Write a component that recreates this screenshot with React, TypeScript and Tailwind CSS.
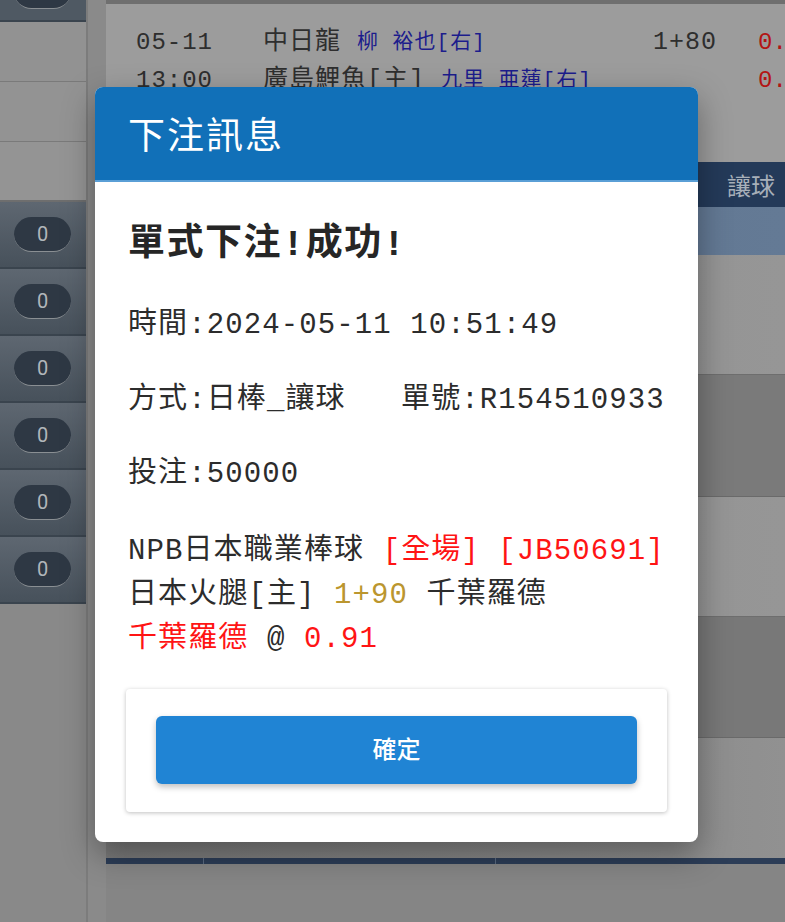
const mono = "font-['Liberation_Mono','Noto_Sans_CJK_TC',monospace]";
const sans = "font-['Noto_Sans_CJK_TC','Noto_Sans',sans-serif]";

function CountRow() {
  return (
    <div className="flex h-[67px] items-center border-b-2 border-[#3a444e] bg-linear-to-b from-[#5e6771] to-[#47515b] pl-[14px]">
      <div className="flex h-[35px] w-[57px] items-center justify-center rounded-full border-b border-[#8a8f93] bg-[#2e3844] font-['Roboto',sans-serif] text-[20px] text-[#b1b6ba]">
        0
      </div>
    </div>
  );
}

function LeftColumn() {
  return (
    <div className="flex w-[88px] flex-col border-r-2 border-[#7c7c7c]">
      <div className="flex h-[22px] items-start overflow-hidden border-b-2 border-[#3a444e] bg-[#4f5963] pl-[14px]">
        <div className="-mt-[26px] h-[35px] w-[57px] shrink-0 rounded-full border-b border-[#8a8f93] bg-[#2e3844]" />
      </div>
      <div className="h-[60px] border-b border-[#7a7a7a] bg-[#929292]" />
      <div className="h-[60px] border-b border-[#7a7a7a] bg-[#939393]" />
      <div className="h-[60px] border-b-2 border-[#6e6e6e] bg-[#949494]" />
      {[0, 1, 2, 3, 4, 5].map((i) => (
        <CountRow key={i} />
      ))}
      <div className="flex-1 bg-[#898989]" />
    </div>
  );
}

function MatchRow({ time, team, pitcher, line }: { time: string; team: string; pitcher: string; line?: string }) {
  return (
    <div className="flex h-[38px] items-center whitespace-nowrap">
      <span className="w-[127px] shrink-0 text-[24px] text-[#2e2e2e]">{time}</span>
      <span className="flex w-[390px] shrink-0 items-center gap-[16px]">
        <span className="text-[25px] text-[#2e2e2e]">{team}</span>
        <span className="text-[21px] text-[#1c1c8c]">{pitcher}</span>
      </span>
      <span className="w-[105px] shrink-0 text-[25px] text-[#2e2e2e]">{line}</span>
      <span className="shrink-0 text-[24px] tracking-normal text-[#b31414]">0.</span>
    </div>
  );
}

function MainArea() {
  return (
    <div className="flex min-w-0 flex-1 flex-col">
      <div className={`h-[162px] overflow-hidden border-t-4 border-[#6f6f6f] bg-[#9c9c9c] pl-[30px] pt-[20px] tracking-[1px] ${mono}`}>
        <MatchRow time="05-11" team="中日龍" pitcher="柳 裕也[右]" line="1+80" />
        <MatchRow time="13:00" team="廣島鯉魚[主]" pitcher="九里 亜蓮[右]" />
      </div>
      <div className={`flex h-[45px] items-center justify-end bg-[#243a59] pr-[10px] text-[24px] text-[#a7afb9] ${sans}`}>
        讓球
      </div>
      <div className="h-[48px] bg-linear-to-r from-[#5b718c] to-[#647a95]" />
      <div className="h-[120px] border-b border-[#6e6e6e] bg-linear-to-r from-[#8c8c8c] to-[#969696]" />
      <div className="h-[122px] border-b border-[#6a6a6a] bg-[#7a7a7a]" />
      <div className="h-[120px] border-b border-[#6e6e6e] bg-linear-to-r from-[#8c8c8c] to-[#969696]" />
      <div className="h-[121px] border-b border-[#6a6a6a] bg-[#787878]" />
      <div className="h-[120px] bg-linear-to-r from-[#7a7a7a] to-[#919191]" />
      <div className="flex h-[6px] bg-[#2c3d57]">
        <div className="w-[98px] border-r border-[#5a6a80]" />
        <div className="w-[292px] border-r border-[#5a6a80]" />
        <div className="flex-1" />
      </div>
      <div className="flex-1 bg-[#858585]" />
    </div>
  );
}

export default function App() {
  return (
    <div className="relative flex h-[922px] w-[785px] overflow-hidden bg-[#888888]">
      <LeftColumn />
      <div className="w-[18px] bg-[#8a8a8a]" />
      <MainArea />

      {/* dialog */}
      <div className="absolute left-[95px] top-[87px] w-[603px] overflow-hidden rounded-[8px] bg-white shadow-[0_12px_32px_rgba(0,0,0,0.35)]">
        <div className={`flex h-[95px] items-center border-b-2 border-[#5a9fd6] bg-[#1170b8] pl-[33px] text-[37px] tracking-[2px] text-white ${sans}`}>
          下注訊息
        </div>
        <div className={`px-[33px] pb-[30px] pt-[41px] text-[29px] tracking-[1.1px] text-[#2c2c2c] ${mono}`}>
          <div className="text-[37px] font-bold leading-[44px] tracking-[1.5px] text-[#262626]">單式下注!成功!</div>
          <div className="mt-[37px] leading-[44px]">時間:2024-05-11 10:51:49</div>
          <div className="mt-[31px] whitespace-pre leading-[44px]">方式:日棒_讓球   單號:R154510933</div>
          <div className="mt-[30px] leading-[44px]">投注:50000</div>
          <div className="mt-[33px] leading-[44px]">
            <div className="whitespace-pre">
              NPB日本職業棒球 <span className="text-[#ff1414]">[全場] [JB50691]</span>
            </div>
            <div className="whitespace-pre">
              日本火腿[主] <span className="text-[#bb962f]">1+90</span> 千葉羅德
            </div>
            <div className="whitespace-pre">
              <span className="text-[#ff1414]">千葉羅德</span> @ <span className="text-[#ff1414]">0.91</span>
            </div>
          </div>
          <div className="-mx-[2px] mt-[27px] rounded-[4px] bg-white px-[30px] pb-[28px] pt-[27px] shadow-[0_1px_4px_rgba(0,0,0,0.25)]">
            <button className={`flex h-[68px] w-full items-center justify-center rounded-[6px] bg-[#2084d4] pb-[5px] text-[24px] font-medium tracking-normal text-white shadow-[0_3px_6px_rgba(0,0,0,0.25)] ${sans}`}>
              確定
            </button>
          </div>
        </div>
      </div>
    </div>
  );
}
